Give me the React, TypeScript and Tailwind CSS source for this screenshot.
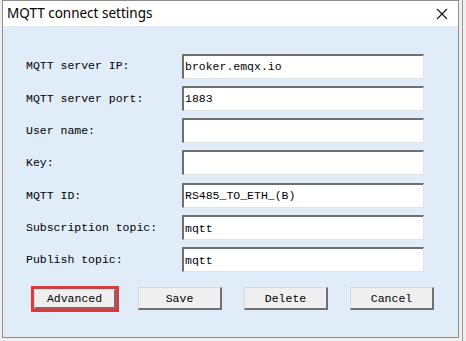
import React from 'react';

const fields = [
  { label: 'MQTT server IP:', value: 'broker.emqx.io' },
  { label: 'MQTT server port:', value: '1883' },
  { label: 'User name:', value: '' },
  { label: 'Key:', value: '' },
  { label: 'MQTT ID:', value: 'RS485_TO_ETH_(B)' },
  { label: 'Subscription topic:', value: 'mqtt' },
  { label: 'Publish topic:', value: 'mqtt' },
];

const mono = "font-['Liberation_Mono',monospace] text-[11.5px] text-black";

function Btn({ children, narrow }: { children: React.ReactNode; narrow?: boolean }) {
  return (
    <button
      className={`${narrow ? 'w-[82px] h-[20px]' : 'w-[84px] h-[23px]'} bg-[#efefef] border-t border-l border-t-[#d8d8d8] border-l-[#d8d8d8] border-r-2 border-b-2 border-r-[#707070] border-b-[#707070] ${mono} flex items-center justify-center`}
    >
      {children}
    </button>
  );
}

export default function App() {
  return (
    <div className="w-[466px] h-[341px] bg-[#eeeeee] relative overflow-hidden">
      {/* window behind */}
      <div className="absolute right-[3px] top-0 bottom-0 w-px bg-[#9a9a9a]" />
      <div className="ml-[2px] w-[457px] h-[338px] border border-[#8e8e8e] bg-white flex flex-col relative">
        {/* Title bar */}
        <div className="h-[25px] flex items-center justify-between bg-white pl-[4px] pr-[8px]">
          <span className="font-['Noto_Sans',sans-serif] text-[13.5px] text-black leading-none">
            MQTT connect settings
          </span>
          <svg width="12" height="12" viewBox="0 0 12 12" className="mr-[2px]">
            <path d="M1 1 L11 11 M11 1 L1 11" stroke="#111" strokeWidth="1.1" />
          </svg>
        </div>

        {/* Body */}
        <div className="flex-1 bg-[#e1ecf9] pt-[28px] pl-[23px]">
          <div className="flex flex-col gap-[8.33px]">
            {fields.map((f) => (
              <div key={f.label} className="flex items-center h-[24px]">
                <span className={`w-[156px] ${mono}`}>{f.label}</span>
                <div
                  className={`w-[242px] h-[25px] bg-white border-t-2 border-l-2 border-t-[#6f6f6f] border-l-[#6f6f6f] border-r border-b border-r-[#e3e3e3] border-b-[#e3e3e3] flex items-center pl-[1px] ${mono}`}
                >
                  {f.value}
                </div>
              </div>
            ))}
          </div>

          <div className="flex items-center mt-[14px] ml-[5px]">
            <div className="border-[3px] border-[#e2383d]">
              <Btn narrow>Advanced</Btn>
            </div>
            <div className="flex gap-[22px] ml-[19px]">
              <Btn>Save</Btn>
              <Btn>Delete</Btn>
              <Btn>Cancel</Btn>
            </div>
          </div>
        </div>
      </div>
    </div>
  );
}
